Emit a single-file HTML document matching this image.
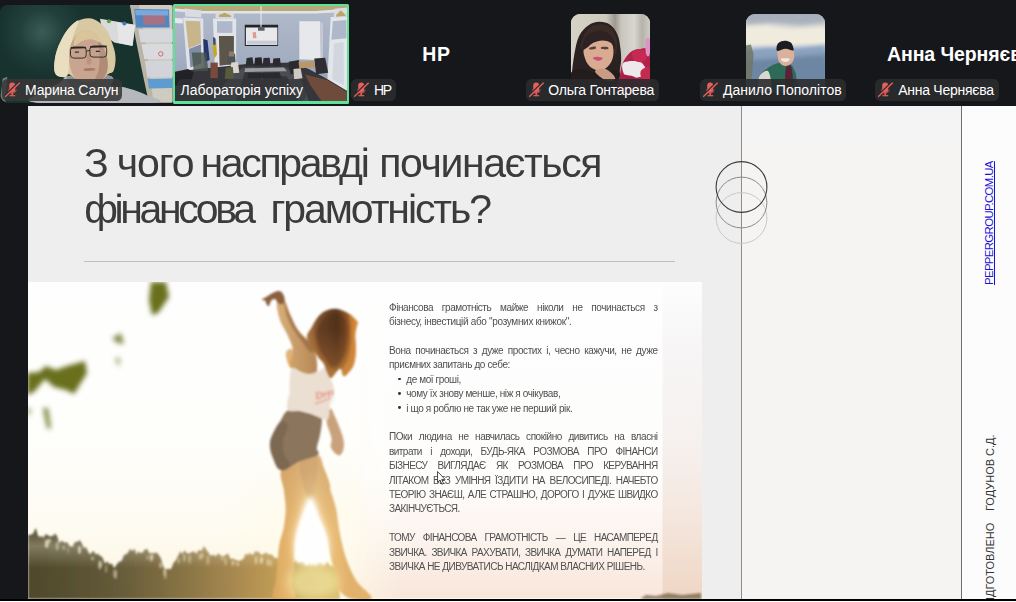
<!DOCTYPE html>
<html lang="uk">
<head>
<meta charset="utf-8">
<title>Zoom</title>
<style>
html,body{margin:0;padding:0;background:#16171b;}
body{width:1016px;height:602px;overflow:hidden;position:relative;font-family:"Liberation Sans",sans-serif;}
#root{position:absolute;left:0;top:0;width:1016px;height:602px;overflow:hidden;background:#16171b;}
.abs{position:absolute;}
.tile{position:absolute;top:5px;height:98px;overflow:hidden;}
.label{position:absolute;top:79.3px;height:21.4px;border-radius:5.5px;background:rgba(42,43,46,.9);color:#fff;font-size:14px;line-height:21px;white-space:pre;}
.label span{position:absolute;top:1.1px;left:0;}
.label svg{position:absolute;left:0;top:0;}
.big{position:absolute;color:#fff;font-weight:bold;font-size:19.5px;line-height:24px;white-space:pre;}
.ava{position:absolute;top:14px;width:79px;height:79px;border-radius:9px;overflow:hidden;}
#slide{position:absolute;left:28px;top:106px;width:988px;height:493px;background:#efeeef;overflow:hidden;}
.ttl{filter:grayscale(1);position:absolute;left:56.6px;color:#3b3b3d;font-size:41px;line-height:46px;white-space:pre;}
.bl{position:absolute;font-size:10px;line-height:12px;height:12px;color:#505053;white-space:pre;}
.bj{white-space:normal;text-align:justify;text-align-last:justify;}
.dot{position:absolute;width:2.8px;height:2.8px;border-radius:50%;background:#333;}
.vt{position:absolute;white-space:pre;font-size:11px;line-height:12px;transform-origin:0 0;transform:rotate(-90deg);color:#333;}
</style>
</head>
<body>
<div id="root">

<!-- participant strip -->
<div class="tile" style="left:0;width:172.7px;top:5px;height:97.5px;border-radius:8px 2px 2px 9px;background:#1d3a33"><svg width="172.7" height="97.5" viewBox="0 5 172.7 97.5" style="position:absolute;left:0;top:0">
<defs>
<radialGradient id="t1g" cx="42" cy="32" r="45" gradientUnits="userSpaceOnUse"><stop offset="0" stop-color="#3b5c56"/><stop offset=".5" stop-color="#22403b"/><stop offset="1" stop-color="#18322e"/></radialGradient>
<filter id="t1b" x="-20%" y="-20%" width="140%" height="140%"><feGaussianBlur stdDeviation="0.7"/></filter>
<filter id="t1d" x="-20%" y="-20%" width="140%" height="140%"><feGaussianBlur stdDeviation="0.35"/></filter>
<filter id="t1c" x="-20%" y="-20%" width="140%" height="140%"><feGaussianBlur stdDeviation="1.6"/></filter>
</defs>
<rect x="0" y="5" width="173" height="98" fill="url(#t1g)"/>
<g filter="url(#t1b)">
<path d="M130.1 4.9 L172.7 4.9 L172.7 102.7 L150.2 102.7 L146.2 80.4 L138.9 45.7 L132.5 16.4Z" fill="#cfcbc0"/>
<path d="M130.1 4.9 L138.9 4.9 L146.2 45.7 L153.5 102.7 L148.9 102.7 L142.5 73.1 L135.2 36.5Z" fill="#b9b4a6"/>
<path d="M134.3 9.1 L169.0 9.5 L169.6 27.4 L136.1 27.4Z" fill="#4f86c4"/>
<path d="M142.5 13.7 L164.5 13.7 L165.4 24.7 L143.5 24.7Z" fill="#c96a6a" opacity=".7"/>
<path d="M135.2 10.1 L168.1 10.4 L168.3 15.5 L135.6 15.2Z" fill="#7fb2e2" opacity=".8"/>
<path d="M138.3 29.2 L172.7 29.2 L172.7 42.0 L140.7 42.4Z" fill="#d6d8dc"/>
<path d="M141.4 44.2 L172.7 43.9 L172.7 58.8 L144.4 59.2Z" fill="#d9dade"/>
<path d="M144.9 61.0 L172.7 60.7 L172.7 76.8 L147.3 77.5Z" fill="#d2d4d9"/>
<path d="M147.7 78.9 L172.7 78.6 L172.7 88.1 L148.9 88.5Z" fill="#5d9bd0"/>
<circle cx="160.8" cy="53.9" r="2.2" fill="none" stroke="#d05050" stroke-width=".8"/>
<path d="M100.1 18.8 L135.2 24.7 L132.3 46.1 L114.2 42.4 L102.3 33.3Z" fill="#d9dadb"/>
<path d="M117.0 22.8 L135.2 25.0 L132.7 45.7 L118.8 43.1Z" fill="#e6e6e8"/>
<circle cx="108.9" cy="21.2" r="2" fill="#5e9a4a"/>
<circle cx="124.3" cy="23.4" r="2" fill="#3f78c8"/>
<path d="M70.4 75.8C79.2 74.7 102.2 74.0 109.6 75.8C117.1 77.6 108.5 83.8 111.5 85.9C114.4 88.0 119.8 86.1 126.1 87.7C132.3 89.4 141.4 92.3 146.2 95.0C151.0 97.7 172.5 101.3 152.6 102.7C132.7 104.1 54.9 104.9 35.6 102.7C16.4 100.5 41.2 94.1 45.7 90.5C50.1 86.8 55.9 84.9 60.3 82.2C64.7 79.6 61.5 77.0 70.4 75.8Z" fill="#b5b9bd"/>
<path d="M70.4 75.8C77.6 74.0 102.4 74.0 109.6 75.8C116.9 77.6 111.9 82.4 110.6 85.9C109.2 89.3 108.1 93.4 102.3 95.0C96.6 96.7 84.5 96.7 78.6 95.0C72.7 93.4 70.9 89.3 69.4 85.9C68.0 82.4 63.1 77.6 70.4 75.8Z" fill="#8f9397"/>
<path d="M54.8 72.2C53.7 68.2 54.4 60.9 55.7 54.8C57.1 48.7 59.3 43.6 62.1 38.4C64.9 33.1 67.7 29.0 71.3 25.6C74.9 22.1 78.0 20.2 82.2 19.2C86.5 18.1 90.8 17.9 95.0 19.7C99.3 21.5 103.0 25.2 106.0 29.2C109.0 33.3 110.1 37.1 111.8 42.0C113.6 47.0 115.2 51.6 115.5 56.7C115.8 61.8 115.0 67.2 113.7 70.4C112.4 73.5 110.2 72.5 108.2 74.0C106.1 75.5 106.0 77.3 102.3 78.6C98.7 79.9 92.3 81.3 87.7 81.3C83.1 81.4 80.3 80.3 76.8 78.9C73.2 77.6 70.6 74.3 68.0 74.0C65.4 73.7 64.5 77.4 62.1 77.1C59.8 76.8 56.0 76.2 54.8 72.2Z" fill="#d8c9a2"/>
<path d="M54.8 72.2C53.7 68.2 54.4 60.9 55.7 54.8C57.1 48.7 59.3 43.6 62.1 38.4C64.9 33.1 68.3 28.7 71.3 25.6C74.2 22.5 78.3 19.0 78.6 21.0C78.9 23.0 74.7 30.5 73.1 36.5C71.5 42.6 70.4 48.1 69.4 54.8C68.5 61.6 69.3 70.0 68.0 74.0C66.7 78.0 64.5 77.4 62.1 77.1C59.8 76.8 56.0 76.2 54.8 72.2Z" fill="#e9dfc0"/>
<path d="M70.4 45.7C71.7 41.7 74.0 37.4 76.8 34.7C79.6 32.0 82.6 30.9 85.9 30.7C89.2 30.5 92.1 31.4 95.0 33.8C97.9 36.2 99.9 40.1 102.0 43.9C104.0 47.6 105.4 50.2 106.4 54.8C107.3 59.4 108.2 65.1 107.5 69.4C106.7 73.8 105.9 76.8 102.3 78.9C98.8 81.1 92.3 81.5 87.7 81.5C83.1 81.5 79.8 81.1 76.8 78.9C73.7 76.8 72.3 73.5 70.9 69.4C69.5 65.4 69.2 60.9 69.1 56.7C69.0 52.4 69.0 49.6 70.4 45.7Z" fill="#c9a48e"/>
<path d="M98.7 42.0C99.9 42.0 104.8 49.9 106.4 54.8C107.9 59.8 108.2 65.1 107.5 69.4C106.7 73.8 104.6 77.0 102.3 78.9C100.1 80.9 95.7 82.1 95.0 80.4C94.4 78.7 97.9 74.0 98.7 69.4C99.5 64.8 99.6 59.8 99.6 54.8C99.6 49.9 97.5 42.0 98.7 42.0Z" fill="#a07c68" opacity=".6"/>
<path d="M76.8 34.7C78.9 32.0 82.6 30.9 85.9 30.7C89.2 30.5 92.3 31.7 95.0 33.8C97.7 35.9 101.5 41.4 100.9 42.4C100.2 43.4 94.7 39.5 91.4 39.3C88.0 39.1 85.4 40.0 82.2 41.1C79.1 42.3 75.0 46.8 74.0 45.7C73.0 44.5 74.6 37.4 76.8 34.7Z" fill="#d9c49c"/>
<path d="M84.4 68.7C85.9 68.2 91.7 67.9 93.6 68.2C95.4 68.4 96.2 69.7 94.7 70.2C93.2 70.7 87.0 71.2 85.2 70.9C83.3 70.6 82.9 69.2 84.4 68.7Z" fill="#8a5048" opacity=".5"/>
<path d="M87.4 54.8C87.9 53.3 89.2 53.3 89.9 54.8C90.6 56.3 91.9 61.5 91.4 63.0C90.8 64.6 87.7 64.9 87.0 63.4C86.3 61.9 86.8 56.4 87.4 54.8Z" fill="#b08a76" opacity=".6"/>
</g>
<g fill="#b8a090" fill-opacity=".35" stroke="#2a2522" stroke-width=".9" filter="url(#t1d)">
<rect x="70.5" y="47.1" width="15.7" height="11.0" rx="3.2"/>
<rect x="89.9" y="46.1" width="16.8" height="11.0" rx="3.2"/>
<path d="M86.3 51.2L89.9 50.4" fill="none"/>
<path d="M70.9 47.9L85.9 47.5M90.3 46.8L106.7 46.4" fill="none" stroke-width="1.7"/>
<path d="M74.9 52.1l4 0M95.9 51.4l4 0" stroke="#3a2c28" stroke-width="1.4" fill="none"/>
</g>
<path d="M2.7 78.6 L7.3 76.8 L5.5 102.3 L0.0 102.3Z" fill="#c8c8c4" opacity=".5" filter="url(#t1b)"/>
</svg></div>
<div class="label" style="left:2px;width:120px;background:rgba(56,55,56,.88)"><svg width="21" height="21" viewBox="0 0 21 21"><use href="#mic"/></svg><span style="left:23.1px;letter-spacing:-0.2px">Марина Салун</span></div>

<div class="abs" style="left:172.7px;top:4px;width:176.5px;height:99.8px;background:#5ce397;border-radius:1.5px"><div class="abs" style="left:2.4px;top:2.4px;width:172.2px;height:95px;overflow:hidden;background:#a9b0bd"><svg width="172.2" height="95" viewBox="175.1 6.4 172.2 95" style="position:absolute;left:0;top:0">
<defs>
<linearGradient id="t2w" x1="0" y1="0" x2="0" y2="1"><stop offset="0" stop-color="#b2bbcb"/><stop offset=".6" stop-color="#a2acc0"/><stop offset="1" stop-color="#8f98ab"/></linearGradient>
<filter id="t2b" x="-20%" y="-20%" width="140%" height="140%"><feGaussianBlur stdDeviation="0.6"/></filter>
<filter id="t2c" x="-20%" y="-20%" width="140%" height="140%"><feGaussianBlur stdDeviation="1.4"/></filter>
</defs>
<rect x="175" y="6" width="173" height="96" fill="url(#t2w)"/>
<g filter="url(#t2b)">
<path d="M175.1 6.4 L347.3 6.4 L347.3 9.1 L316.2 11.3 L202.9 11.3 L175.1 8.8Z" fill="#b7a878"/>
<path d="M175.1 8.8 L202.9 11.3 L316.2 11.3 L347.3 9.1 L347.3 12.1 L316.2 13.9 L202.9 13.9 L175.1 11.7Z" fill="#e3e4e6"/>
<!-- left window -->
<path d="M183.2 17.9 L203.3 19.0 L204.0 68.0 L187.5 73.1Z" fill="#dfe2e8"/>
<path d="M185.7 21.2 L200.3 21.6 L201.1 43.9 L188.6 49.0Z" fill="#c9b58c"/>
<path d="M189.0 49.3 L201.1 44.6 L201.4 64.0 L190.5 68.0Z" fill="#7f8da6"/>
<path d="M184.6 8.8 L201.4 11.0 L201.4 17.9 L185.4 16.8Z" fill="#d9dce2"/>
<path d="M175.1 18.3 L182.8 19.0 L182.8 23.8 L175.1 23.4Z" fill="#e6e8ec"/>
<!-- door -->
<path d="M213.1 19.0 L236.2 19.0 L236.2 71.6 L215.0 71.6Z" fill="#e1e4e9"/>
<path d="M219.0 36.5 L234.0 36.5 L234.0 64.3 L219.7 66.2Z" fill="#5b554c"/>
<path d="M217.1 21.6 L232.5 21.6 L232.5 33.3 L217.1 33.3Z" fill="#aeb8ca"/>
<path d="M215.7 12.8 L234.0 12.8 L234.0 19.0 L215.7 19.0Z" fill="#d8dadf"/>
<path d="M219.0 15.5 L224.8 13.2 L231.2 16.1 L231.2 17.5 L219.0 17.5Z" fill="#b9a668"/>
<!-- flags -->
<path d="M203.3 39.3 L207.6 40.6 L209.8 60.3 L205.8 62.1 L204.0 54.8Z" fill="#27366c"/>
<path d="M213.1 37.5 L216.1 39.3 L217.1 54.8 L214.6 58.8 L213.1 51.2Z" fill="#c7a624"/>
<path d="M213.1 37.5 L215.3 38.4 L215.7 44.8 L213.5 45.3Z" fill="#2f4a9a"/>
<!-- screen -->
<path d="M244.9 25.2 L278.2 25.2 L278.2 46.4 L244.9 46.4Z" fill="#23262b"/>
<path d="M246.0 27.8 L277.5 27.8 L277.5 45.3 L246.0 45.3Z" fill="#e9e9ec"/>
<path d="M247.1 41.1 L276.7 41.1 L276.7 45.0 L247.1 45.0Z" fill="#c9ccd4"/>
<path d="M252.6 32.9 L255.9 32.2 L256.6 38.4 L253.3 38.7Z" fill="#d98a7a" opacity=".8"/>
<path d="M260.6 6.4 L261.7 6.4 L261.7 27.4 L260.6 27.4Z" fill="#e8e8ea"/>
<path d="M258.1 27.4 L264.7 27.4 L264.7 31.1 L258.1 31.1Z" fill="#5a5c60"/>
<!-- right cabinet -->
<path d="M299.4 21.6 L320.2 21.6 L321.0 60.7 L299.4 59.6Z" fill="#e6e8eb"/>
<path d="M320.2 22.3 L323.1 23.4 L323.1 58.5 L321.0 60.7Z" fill="#c3c8d2"/>
<!-- far right door -->
<path d="M330.8 17.5 L347.3 16.8 L347.3 91.4 L327.5 80.4Z" fill="#e2e5ea"/>
<path d="M333.0 21.6 L346.5 20.5 L346.5 38.7 L331.5 40.2Z" fill="#aeb8ca"/>
<path d="M334.1 43.9 L343.6 42.4 L344.0 85.9 L332.6 79.7Z" fill="#d2d6de"/>
<path d="M334.5 9.1 L346.9 8.0 L346.9 16.8 L333.7 18.3Z" fill="#dadde3"/>
<path d="M336.3 15.5 L340.9 10.6 L345.4 15.0 L345.4 16.4 L336.3 17.2Z" fill="#b9a668"/>
<!-- floor / lower dark -->
<path d="M175.1 76.8 L190.1 70.4 L213.9 68.0 L246.8 64.3 L290.6 63.0 L308.9 69.4 L329.0 80.4 L347.3 91.4 L347.3 101.6 L175.1 101.6Z" fill="#34363a"/>
<path d="M305.2 74.9 L327.2 80.4 L347.3 92.3 L347.3 101.6 L321.7 101.6 L310.7 85.9Z" fill="#6e4c3a"/>
<path d="M175.1 72.2 L188.3 69.4 L193.8 73.1 L190.1 85.9 L175.1 85.9Z" fill="#232427"/>
<!-- table top -->
<path d="M243.1 68.0 L285.5 67.3 L301.6 80.4 L308.9 101.6 L297.9 101.6 L287.0 76.8 L244.9 72.7 L235.8 101.6 L212.0 101.6 L230.3 76.8Z" fill="#4a4d52"/>
<path d="M245.3 68.7 L284.0 68.0 L287.0 71.6 L244.6 72.4Z" fill="#9a9da2"/>
<path d="M261.4 73.1 L262.8 73.1 L262.8 78.6 L261.4 78.6Z" fill="#d8d8d8"/>
<path d="M248.6 73.1 L279.6 72.7 L281.5 78.6 L247.7 78.9Z" fill="#2a2b2e"/>
<!-- people -->
<path d="M228.1 54.8 L235.1 54.1 L235.8 64.3 L227.7 65.1Z" fill="#4e5257"/>
<path d="M229.2 51.9 L234.0 51.9 L234.3 57.0 L228.8 57.0Z" fill="#8f7a6a"/>
<path d="M246.8 58.5 L252.6 57.7 L253.7 65.8 L245.7 66.2Z" fill="#2c2d31"/>
<path d="M255.2 58.1 L261.7 57.7 L262.5 65.8 L254.4 65.8Z" fill="#25262a"/>
<path d="M263.6 58.5 L269.8 58.1 L270.5 66.2 L262.8 66.2Z" fill="#2e2a30"/>
<path d="M273.4 58.8 L280.0 58.5 L281.1 66.2 L272.7 66.5Z" fill="#2a2b2f"/>
<path d="M231.4 63.0 L238.0 62.5 L239.4 73.1 L230.3 73.8Z" fill="#d9d6cf"/>
<path d="M225.9 68.0 L232.9 67.3 L234.0 78.6 L224.8 79.7Z" fill="#5a5a3e"/>
<path d="M288.8 62.1 L299.0 60.3 L301.6 73.1 L290.6 74.9Z" fill="#2b2b2f"/>
<path d="M293.5 69.4 L300.8 68.7 L302.7 78.6 L294.3 79.7Z" fill="#cfc8c2"/>
<path d="M314.4 58.8 L325.3 58.1 L328.3 73.1 L316.2 74.6Z" fill="#2d2e33"/>
<path d="M298.7 62.1 L314.4 61.4 L315.1 68.0 L299.4 68.7Z" fill="#b9976a"/>
<path d="M210.6 63.0 L217.9 63.0 L217.9 78.6 L210.6 78.6Z" fill="#7a4a3a"/>
<path d="M191.9 53.0 L206.5 53.0 L208.4 71.3 L193.8 71.6Z" fill="#48524a" opacity=".8"/>
</g>
</svg></div></div>
<div class="label" style="left:177px;width:129px;background:rgba(52,53,56,.62)"><span style="left:3.6px;letter-spacing:-0.03px">Лабораторія успіху</span></div>

<div class="big" style="left:422.3px;top:41.8px;letter-spacing:0.7px">HP</div>
<div class="label" style="left:351px;width:45px"><svg width="21" height="21" viewBox="0 0 21 21"><use href="#mic"/></svg><span style="left:22.9px;letter-spacing:-1.3px">HP</span></div>

<div class="ava" style="left:571px;background:#c9c4b8"><svg width="79" height="79" viewBox="570.8 14.2 79 79" style="position:absolute;left:0;top:0">
<defs>
<linearGradient id="a1w" x1="0" y1="0" x2="1" y2="0"><stop offset="0" stop-color="#d6d2c6"/><stop offset=".45" stop-color="#cdc9bd"/><stop offset=".56" stop-color="#9d998f"/><stop offset=".64" stop-color="#c9c6bd"/><stop offset=".8" stop-color="#d8d6d0"/><stop offset=".9" stop-color="#b5b2aa"/><stop offset="1" stop-color="#cfcdc6"/></linearGradient>
<filter id="a1b" x="-20%" y="-20%" width="140%" height="140%"><feGaussianBlur stdDeviation="0.7"/></filter>
</defs>
<rect x="570" y="14" width="80" height="80" fill="url(#a1w)"/>
<g filter="url(#a1b)">
<path d="M571.2 78.6C571.8 71.6 572.7 62.4 574.1 54.8C575.5 47.3 576.3 41.8 578.8 36.5C581.3 31.3 584.4 28.2 588.0 25.6C591.6 23.0 595.0 22.1 598.9 21.9C602.9 21.8 606.6 22.6 609.9 24.9C613.2 27.2 615.4 30.6 617.2 34.7C619.1 38.9 619.5 43.2 620.1 47.9C620.8 52.6 621.0 56.1 620.9 60.7C620.8 65.2 619.3 69.5 619.6 73.1C619.9 76.7 621.8 76.7 622.3 80.4C622.8 84.1 631.6 91.2 622.3 93.6C613.1 95.9 580.0 96.3 570.8 93.6C561.6 90.9 570.6 85.6 571.2 78.6Z" fill="#2b2220"/>
<path d="M580.3 45.7C581.0 42.1 584.4 33.0 588.0 29.2C591.6 25.5 596.2 24.7 600.4 24.7C604.6 24.7 608.4 26.1 611.4 29.2C614.3 32.4 616.2 37.4 616.9 42.0C617.5 46.6 616.0 55.2 615.0 54.8C614.0 54.5 614.0 43.8 611.4 40.2C608.7 36.6 604.4 35.2 600.4 34.7C596.5 34.2 592.4 34.8 589.4 37.5C586.5 40.1 585.6 47.9 584.0 49.3C582.3 50.8 579.6 49.3 580.3 45.7Z" fill="#3a2c26"/>
<path d="M583.6 49.0C584.3 46.0 585.0 42.6 588.0 40.6C591.0 38.5 596.5 37.5 600.4 37.5C604.4 37.5 607.6 38.4 609.9 40.6C612.2 42.8 612.9 46.1 613.2 49.7C613.5 53.3 613.2 57.3 611.7 60.7C610.3 64.1 607.9 66.9 605.2 68.7C602.5 70.5 599.7 71.1 596.8 70.5C593.8 70.0 591.0 68.2 588.7 65.8C586.5 63.4 585.2 60.0 584.3 57.0C583.4 54.0 582.9 51.9 583.6 49.0Z" fill="#d9ab93"/>
<path d="M582.1 49.3C582.0 47.3 583.2 39.8 585.8 36.5C588.4 33.3 592.8 31.7 596.8 31.1C600.7 30.4 604.6 31.1 607.7 32.9C610.8 34.7 612.8 38.2 614.1 41.1C615.4 44.1 615.7 49.0 615.0 49.3C614.4 49.7 612.8 44.5 610.5 42.9C608.2 41.4 605.4 40.6 602.2 40.6C599.1 40.6 595.9 41.6 593.1 42.9C590.3 44.3 588.7 46.7 586.7 47.9C584.7 49.0 582.3 51.4 582.1 49.3Z" fill="#2f2420"/>
<path d="M592.7 58.1C592.6 57.4 595.9 57.0 597.7 57.0C599.4 57.1 602.5 57.8 602.6 58.5C602.7 59.2 600.0 61.1 598.2 61.0C596.4 61.0 592.8 58.8 592.7 58.1Z" fill="#cf4f78"/>
<path d="M589.4 47.9C590.4 47.4 593.9 46.6 594.9 46.8C596.0 47.0 596.2 48.5 595.3 49.0C594.4 49.5 590.9 49.9 589.8 49.7C588.8 49.5 588.5 48.4 589.4 47.9Z" fill="#5a4038"/>
<path d="M601.3 47.1C602.3 46.8 606.2 46.8 607.4 47.1C608.5 47.5 608.7 48.9 607.7 49.3C606.7 49.7 602.8 49.7 601.7 49.3C600.5 48.9 600.3 47.5 601.3 47.1Z" fill="#5a4038"/>
<path d="M570.8 73.1C573.2 68.8 579.3 69.4 584.0 69.4C588.6 69.4 592.5 72.8 596.8 73.1C601.0 73.4 603.6 71.3 607.7 71.3C611.8 71.3 617.0 69.1 619.6 73.1C622.2 77.1 631.1 89.9 622.3 93.6C613.6 97.3 580.1 97.3 570.8 93.6C561.5 89.9 568.4 77.4 570.8 73.1Z" fill="#241c1e"/>
<path d="M594.9 71.6C594.9 69.7 602.3 68.2 605.9 69.4C609.5 70.7 615.0 76.6 615.0 78.6C615.0 80.6 609.5 81.7 605.9 80.4C602.3 79.2 594.9 73.6 594.9 71.6Z" fill="#c99a84"/>
<!-- flowers -->
<path d="M622.3 64.0C624.1 59.7 626.7 55.6 629.6 53.0C632.6 50.4 635.2 49.3 638.8 49.3C642.3 49.3 647.5 45.0 649.4 53.0C651.3 61.0 654.9 86.3 649.4 93.6C643.9 100.9 624.0 96.6 618.7 93.6C613.3 90.5 618.9 82.1 619.6 76.8C620.3 71.4 620.5 68.2 622.3 64.0Z" fill="#b3234c"/>
<path d="M622.3 64.3C623.5 61.7 628.0 61.5 631.5 61.2C634.9 61.0 638.9 60.9 641.5 63.0C644.2 65.2 646.9 70.5 646.1 73.1C645.3 75.7 640.7 77.2 637.0 77.7C633.2 78.2 627.7 78.2 625.1 75.8C622.4 73.4 621.2 67.0 622.3 64.3Z" fill="#ece8ec"/>
<path d="M631.8 53.0C632.5 50.9 636.2 49.7 638.8 49.7C641.4 49.7 645.1 50.9 646.1 53.0C647.1 55.1 646.2 59.7 644.3 61.2C642.3 62.7 637.4 62.7 635.1 61.2C632.9 59.7 631.2 55.1 631.8 53.0Z" fill="#c62a52"/>
<path d="M645.2 41.1C645.8 38.3 648.6 36.8 649.4 39.3C650.1 41.8 650.0 52.0 649.4 54.8C648.8 57.6 646.9 57.3 646.1 54.8C645.3 52.4 644.6 43.9 645.2 41.1Z" fill="#df93c2"/>
<path d="M619.6 76.8C621.6 73.6 626.5 75.2 629.6 75.8C632.8 76.5 636.3 77.2 637.0 80.4C637.6 83.6 636.6 91.2 633.3 93.6C630.0 95.9 621.2 96.6 618.7 93.6C616.2 90.5 617.6 79.9 619.6 76.8Z" fill="#a81c44"/>
<path d="M640.6 71.3C641.9 69.0 647.8 65.6 649.4 67.6C651.0 69.6 650.6 79.9 649.4 82.2C648.1 84.5 644.0 82.4 642.4 80.4C640.9 78.4 639.4 73.6 640.6 71.3Z" fill="#c42c50"/>
</g>
</svg></div>
<div class="label" style="left:525.8px;width:133.5px"><svg width="21" height="21" viewBox="0 0 21 21"><use href="#mic"/></svg><span style="left:22.5px;letter-spacing:-0.257px">Ольга Гонтарева</span></div>

<div class="ava" style="left:745.5px;background:#7d94ad"><svg width="79" height="79" viewBox="745.4 14.2 79 79" style="position:absolute;left:0;top:0">
<defs>
<linearGradient id="a2s" x1="0" y1="0" x2="0" y2="1"><stop offset="0" stop-color="#9aa4b4"/><stop offset=".12" stop-color="#c9ccd0"/><stop offset=".22" stop-color="#ece8da"/><stop offset=".34" stop-color="#f2eedf"/><stop offset=".42" stop-color="#b9c6d8"/><stop offset=".5" stop-color="#7f98b8"/><stop offset=".65" stop-color="#6f89a8"/><stop offset="1" stop-color="#7890ac"/></linearGradient>
<filter id="a2b" x="-20%" y="-20%" width="140%" height="140%"><feGaussianBlur stdDeviation="0.7"/></filter>
<filter id="a2c" x="-20%" y="-20%" width="140%" height="140%"><feGaussianBlur stdDeviation="2"/></filter>
</defs>
<rect x="745" y="14" width="80" height="80" fill="url(#a2s)"/>
<g filter="url(#a2c)">
<path d="M745.4 14.3 L824.3 14.3 L824.3 21.9 L799.6 24.7 L772.2 21.9 L745.4 23.8Z" fill="#a9b0bc"/>
<path d="M745.4 27.4 L766.8 25.6 L792.3 31.1 L824.3 27.4 L824.3 42.0 L792.3 44.8 L745.4 45.7Z" fill="#f0ecdd"/>
<path d="M745.4 53.0 L766.8 47.9 L792.3 49.7 L824.3 45.7 L824.3 60.3 L745.4 62.1Z" fill="#8aa2c0"/>
<path d="M745.4 60.3 L824.3 54.8 L824.3 93.6 L745.4 93.6Z" fill="#6d86a4"/>
</g>
<g filter="url(#a2b)">
<path d="M745.4 45.7 L750.3 44.8 L753.0 54.8 L751.2 78.6 L745.4 80.4Z" fill="#6f7460" opacity=".8"/>
<!-- jacket -->
<path d="M758.0 78.9C759.0 74.9 759.9 74.0 763.1 71.3C766.3 68.5 771.3 64.9 775.9 63.6C780.5 62.3 785.4 62.6 788.7 64.0C792.0 65.3 792.9 68.3 794.2 71.3C795.5 74.2 795.8 76.4 796.0 80.4C796.2 84.4 802.0 91.2 795.1 93.6C788.2 95.9 764.3 96.2 757.6 93.6C750.9 90.9 757.0 83.0 758.0 78.9Z" fill="#2f6a58"/>
<path d="M758.0 78.9C758.8 75.2 760.3 73.8 762.2 72.7C764.1 71.7 767.1 69.3 768.6 73.1C770.1 76.8 772.4 89.9 770.4 93.6C768.4 97.3 759.9 96.2 757.6 93.6C755.4 90.9 757.2 82.7 758.0 78.9Z" fill="#d9d8d0"/>
<path d="M785.0 69.4C786.0 64.8 789.6 63.6 790.9 68.0C792.2 72.3 793.3 89.0 792.3 93.6C791.4 98.2 787.1 97.9 785.8 93.6C784.4 89.2 784.1 74.0 785.0 69.4Z" fill="#5a2438"/>
<!-- head -->
<path d="M777.4 49.3C778.1 47.6 779.3 47.5 781.4 47.1C783.4 46.8 786.6 46.6 788.7 47.1C790.7 47.7 791.8 48.2 792.7 50.3C793.6 52.3 793.9 55.9 793.4 58.5C793.0 61.0 791.8 62.9 790.1 64.3C788.5 65.7 786.1 66.4 784.1 66.2C782.1 65.9 780.5 64.8 779.2 63.0C777.9 61.3 777.3 59.1 777.0 56.7C776.7 54.2 776.6 51.1 777.4 49.3Z" fill="#d9b19c"/>
<path d="M775.9 47.9C776.0 46.4 776.6 44.2 778.1 42.9C779.6 41.7 781.9 41.0 784.1 40.9C786.3 40.9 788.6 41.5 790.1 42.8C791.7 44.0 792.3 46.4 792.7 47.9C793.1 49.3 793.7 50.6 792.3 50.8C791.0 51.0 787.7 48.9 785.0 49.0C782.3 49.0 779.0 51.4 777.4 51.2C775.7 51.0 775.8 49.4 775.9 47.9Z" fill="#1d1e22"/>
<path d="M780.6 58.8C781.8 58.3 787.5 58.3 788.7 58.8C789.9 59.4 788.4 61.2 787.2 61.8C786.1 62.3 783.5 62.3 782.3 61.8C781.1 61.2 779.5 59.4 780.6 58.8Z" fill="#f2e8e2"/>
</g>
</svg></div>
<div class="label" style="left:700px;width:146px"><svg width="21" height="21" viewBox="0 0 21 21"><use href="#mic"/></svg><span style="left:22.9px;letter-spacing:0.02px">Данило Пополітов</span></div>

<div class="big" style="left:887px;top:41.8px;letter-spacing:-0.1px">Анна Черняєва</div>
<div class="label" style="left:874.8px;width:124px"><svg width="21" height="21" viewBox="0 0 21 21"><use href="#mic"/></svg><span style="left:23.4px;letter-spacing:-0.258px">Анна Черняєва</span></div>

<svg width="0" height="0" style="position:absolute">
<defs>
<g id="mic">
<path d="M7.2 6.6a3 3 0 0 1 6 0v4.2a3 3 0 0 1-6 0z" fill="#e4605d"/>
<path d="M6.3 10.2c0 2.6 1.7 4 3.9 4s3.9-1.4 3.9-4" fill="none" stroke="#e4605d" stroke-width="1.1" opacity=".55"/>
<path d="M10.2 13.6v2.6" stroke="#e4605d" stroke-width="1.5" fill="none"/>
<path d="M7.4 16.7h5.8" stroke="#e4605d" stroke-width="1.2" fill="none"/>
<path d="M2.5 17L17 2.9" stroke="#2a2b2e" stroke-width="1.5"/>
<path d="M3.2 17.8L17.7 3.7" stroke="#e4605d" stroke-width="1.35"/>
</g>
</defs>
</svg>

<!-- shared slide -->
<div id="slide">
  <div class="abs" style="left:713.5px;top:0;width:220px;height:493px;background:#f5f4f3"></div>
  <div class="abs" style="left:713.5px;top:0;width:220px;height:38px;background:#f4f4f5"></div>
  <div class="abs" style="left:934px;top:0;width:60px;height:493px;background:#fcfcfd"></div>
  <div class="abs" style="left:713px;top:0;width:1px;height:493px;background:#8f8f8f"></div>
  <div class="abs" style="left:933px;top:0;width:1.2px;height:493px;background:#6f6f6f"></div>
  <svg class="abs" style="left:680px;top:40px" width="70" height="110" viewBox="708 146 70 110">
    <circle cx="741.5" cy="218" r="25.4" fill="none" stroke="#c9c9c9" stroke-width="1"/>
    <circle cx="741.5" cy="202.5" r="25.4" fill="none" stroke="#8a8a8a" stroke-width="1"/>
    <circle cx="741.5" cy="187" r="25.4" fill="none" stroke="#3c3c3c" stroke-width="1.1"/>
  </svg>
  <div class="ttl" style="left:55.9px;top:33.8px;letter-spacing:0px">З</div>
  <div class="ttl" style="left:88.7px;top:33.8px;letter-spacing:-1.067px">чого</div>
  <div class="ttl" style="left:172.5px;top:33.8px;letter-spacing:-2.35px">насправді</div>
  <div class="ttl" style="left:351.3px;top:33.8px;letter-spacing:-1.43px">починається</div>
  <div class="ttl" style="left:56.2px;top:80.2px;letter-spacing:-3.38px">фінансова</div>
  <div class="ttl" style="left:242.4px;top:80.2px;letter-spacing:-2.082px">грамотність?</div>
  <div class="abs" style="left:56.3px;top:154.6px;width:590.5px;height:1.2px;background:#c0c0c0"></div>
  <div class="abs" id="photo" style="left:0;top:176px;width:673.5px;height:317px;background:#fdf8ee;overflow:hidden"><svg width="673.5" height="317" viewBox="28 282 673.5 317" style="position:absolute;left:0;top:0">
<defs>
<linearGradient id="pSky" x1="0" y1="0" x2="0" y2="1">
<stop offset="0" stop-color="#fefefe"/><stop offset=".5" stop-color="#fefefb"/><stop offset=".8" stop-color="#fefbf1"/><stop offset="1" stop-color="#fcf4e0"/>
</linearGradient>
<radialGradient id="pSun" cx="313" cy="548" r="100" gradientUnits="userSpaceOnUse">
<stop offset="0" stop-color="#ffffff" stop-opacity="1"/><stop offset=".25" stop-color="#fffdf0" stop-opacity=".95"/><stop offset=".5" stop-color="#fffbea" stop-opacity=".55"/><stop offset=".75" stop-color="#fffae8" stop-opacity=".2"/><stop offset="1" stop-color="#fffae8" stop-opacity="0"/>
</radialGradient>
<linearGradient id="pTree" x1="28" y1="0" x2="340" y2="0" gradientUnits="userSpaceOnUse">
<stop offset="0" stop-color="#453f22"/><stop offset=".28" stop-color="#5c5230"/><stop offset=".52" stop-color="#86703e"/><stop offset=".72" stop-color="#b08c4c"/><stop offset=".88" stop-color="#c9a655"/><stop offset="1" stop-color="#d8bc6a"/>
</linearGradient>
<linearGradient id="pTreeV" x1="0" y1="530" x2="0" y2="599" gradientUnits="userSpaceOnUse">
<stop offset="0" stop-color="#fff" stop-opacity=".0"/><stop offset=".25" stop-color="#fff" stop-opacity=".75"/><stop offset="1" stop-color="#fff" stop-opacity="1"/>
</linearGradient>
<mask id="pTreeM"><rect x="28" y="520" width="400" height="80" fill="url(#pTreeV)"/></mask>
<linearGradient id="pHaze" x1="0" y1="528" x2="0" y2="568" gradientUnits="userSpaceOnUse"><stop offset="0" stop-color="#fff8e6" stop-opacity="0"/><stop offset=".45" stop-color="#fff8e6" stop-opacity=".28"/><stop offset="1" stop-color="#fff8e6" stop-opacity="0"/></linearGradient>
<linearGradient id="pStrip" x1="0" y1="282" x2="0" y2="599" gradientUnits="userSpaceOnUse"><stop offset="0" stop-color="#fdfdfd"/><stop offset=".22" stop-color="#f7f5f6"/><stop offset=".5" stop-color="#f6f1ef"/><stop offset=".75" stop-color="#f4e6dd"/><stop offset="1" stop-color="#efd6c4"/></linearGradient>
<linearGradient id="pPanel" x1="0" y1="282" x2="0" y2="599" gradientUnits="userSpaceOnUse">
<stop offset="0" stop-color="#fefefe"/><stop offset=".62" stop-color="#fefdfc"/><stop offset=".82" stop-color="#fcf3ed"/><stop offset="1" stop-color="#f8e6da"/>
</linearGradient>
<linearGradient id="pPanelFade" x1="345" y1="0" x2="400" y2="0" gradientUnits="userSpaceOnUse">
<stop offset="0" stop-color="#fff" stop-opacity="0"/><stop offset="1" stop-color="#fff" stop-opacity="1"/>
</linearGradient>
<mask id="pPanelMask"><rect x="28" y="282" width="674" height="316" fill="url(#pPanelFade)"/></mask>
<linearGradient id="pLegL" x1="270" y1="0" x2="312" y2="0" gradientUnits="userSpaceOnUse">
<stop offset="0" stop-color="#d8a45c"/><stop offset=".55" stop-color="#e9bb74"/><stop offset="1" stop-color="#f8dc9c"/>
</linearGradient>
<linearGradient id="pLegR" x1="305" y1="0" x2="350" y2="0" gradientUnits="userSpaceOnUse">
<stop offset="0" stop-color="#f8dc9c"/><stop offset=".5" stop-color="#ecc07a"/><stop offset="1" stop-color="#e2b26c"/>
</linearGradient>
<linearGradient id="pArm" x1="275" y1="0" x2="315" y2="0" gradientUnits="userSpaceOnUse">
<stop offset="0" stop-color="#d9b07a"/><stop offset="1" stop-color="#b98a58"/>
</linearGradient>
<linearGradient id="pLegV" x1="0" y1="470" x2="0" y2="599" gradientUnits="userSpaceOnUse">
<stop offset="0" stop-color="#c99c6a" stop-opacity=".55"/><stop offset=".45" stop-color="#c99c6a" stop-opacity="0"/>
</linearGradient>
<linearGradient id="pHair" x1="306" y1="0" x2="358" y2="0" gradientUnits="userSpaceOnUse">
<stop offset="0" stop-color="#b07a44"/><stop offset=".25" stop-color="#7a4e2a"/><stop offset=".6" stop-color="#5e3a20"/><stop offset=".85" stop-color="#a05e28"/><stop offset="1" stop-color="#d98a3a"/>
</linearGradient>
<linearGradient id="pHairV" x1="0" y1="330" x2="0" y2="378" gradientUnits="userSpaceOnUse">
<stop offset="0" stop-color="#d08a40" stop-opacity="0"/><stop offset="1" stop-color="#d08a40" stop-opacity=".75"/>
</linearGradient>
<clipPath id="pTopClip"><path d="M292.3 368.1C294.1 367.0 297.0 370.2 299.8 371.3C302.7 372.4 305.2 374.0 308.2 374.1C311.3 374.2 313.5 373.3 316.8 372.1C320.0 371.0 323.7 366.7 326.1 367.7C328.5 368.7 328.8 374.1 330.1 377.7C331.5 381.3 333.3 382.9 333.7 387.7C334.2 392.4 333.1 402.5 332.7 404.0C332.4 405.5 332.3 395.3 331.7 396.0C331.2 396.7 330.5 403.7 329.7 408.0C328.9 412.2 329.9 418.1 327.3 419.5C324.8 421.0 320.4 417.4 315.8 415.9C311.2 414.4 306.9 412.2 301.8 411.1C296.8 410.1 290.3 412.7 287.9 410.0C285.5 407.2 288.2 398.6 288.5 396.0C288.8 393.4 289.2 398.9 289.5 395.6C289.7 392.3 289.4 382.6 289.9 377.7C290.4 372.7 290.5 369.3 292.3 368.1Z"/></clipPath>
<filter id="pb1" x="-20%" y="-20%" width="140%" height="140%"><feGaussianBlur stdDeviation="1.3"/></filter>
<filter id="pb2" x="-20%" y="-20%" width="140%" height="140%"><feGaussianBlur stdDeviation="2.4"/></filter>
<filter id="pb3" x="-20%" y="-20%" width="140%" height="140%"><feGaussianBlur stdDeviation="0.8"/></filter>
<filter id="pb4" x="-30%" y="-30%" width="160%" height="160%"><feGaussianBlur stdDeviation="5"/></filter>
</defs>
<rect x="28" y="282" width="674" height="316" fill="url(#pSky)"/>
<!-- sun glow -->
<rect x="28" y="282" width="460" height="316" fill="url(#pSun)"/>
<!-- tree line -->
<g filter="url(#pb3)" opacity=".95">
<path fill="url(#pTree)" d="M28 599L28.0 534.8L30.4 535.0L33.2 533.6L35.8 528.0L37.9 535.5L40.2 537.2L41.8 535.8L43.5 537.9L45.7 534.0L47.4 534.9L50.1 536.6L51.7 536.0L53.3 535.9L54.9 533.3L57.5 537.0L59.2 543.4L61.8 540.4L64.6 543.1L66.9 541.9L69.7 546.1L72.4 547.0L74.2 543.3L75.9 541.6L77.3 542.3L79.6 539.9L81.9 543.6L83.8 548.2L85.8 546.7L87.9 550.9L89.4 553.9L90.8 553.6L93.4 550.7L95.9 554.4L98.1 553.4L99.6 555.4L102.3 557.1L104.8 563.3L107.5 561.6L109.4 564.2L111.9 563.4L114.3 568.3L116.9 563.9L119.7 561.3L121.5 561.2L124.2 554.8L126.9 554.1L128.8 551.3L130.4 548.5L132.0 551.2L134.8 548.7L136.3 554.4L138.4 551.3L140.2 553.0L142.7 552.6L144.7 549.6L147.4 548.9L149.5 553.7L151.1 552.7L153.8 553.4L156.3 552.2L158.3 554.3L160.9 558.2L162.9 566.1L165.5 570.2L167.6 568.5L170.0 569.5L171.8 567.4L173.4 563.0L176.2 559.8L178.4 555.2L180.3 551.1L182.1 554.2L184.7 550.3L187.2 553.4L189.6 553.2L192.1 551.7L194.4 551.4L196.5 553.7L198.9 549.7L201.6 550.9L203.8 545.9L206.0 549.1L208.3 552.6L210.9 556.0L213.4 554.6L215.7 556.4L218.2 553.2L220.8 555.7L223.2 556.5L225.9 554.7L228.1 553.3L230.6 559.3L232.7 558.5L235.1 559.6L236.8 560.6L239.0 560.7L241.0 560.2L243.4 558.7L245.9 553.3L247.5 554.9L249.8 552.8L252.2 555.0L253.6 553.7L255.3 550.7L256.9 552.0L258.6 551.2L260.0 553.4L261.9 554.9L264.2 553.2L266.8 552.5L268.8 554.7L270.8 554.0L273.3 556.1L274.8 557.9L276.3 557.7L278.2 558.2L280.9 560.2L282.9 560.6L285.2 558.2L286.8 560.0L289.0 562.7L291.8 561.1L293.7 563.3L295.1 558.5L297.3 562.2L298.9 562.6L301.5 561.4L303.5 560.6L305.3 565.6L307.2 565.7L309.9 563.6L311.7 566.2L313.8 562.8L315.6 566.7L317.7 562.4L319.8 561.6L322.1 563.8L323.9 566.2L326.4 561.5L328.6 563.4L331.3 566.9L333.0 563.8L334.6 568.6L336.5 566.3L338.5 566.8L340 599Z"/>
</g>
<g filter="url(#pb1)"><ellipse cx="233.3" cy="562.8" rx="1.6" ry="2.4" fill="#fdf2d2" opacity="0.41"/><ellipse cx="178.7" cy="561.0" rx="1.1" ry="3.0" fill="#fdf2d2" opacity="0.49"/><ellipse cx="160.7" cy="565.3" rx="1.5" ry="3.1" fill="#fdf2d2" opacity="0.51"/><ellipse cx="49.5" cy="541.0" rx="1.3" ry="2.8" fill="#fdf2d2" opacity="0.62"/><ellipse cx="270.9" cy="563.1" rx="0.8" ry="3.6" fill="#fdf2d2" opacity="0.57"/><ellipse cx="151.2" cy="557.9" rx="1.5" ry="3.7" fill="#fdf2d2" opacity="0.52"/><ellipse cx="165.3" cy="574.5" rx="1.2" ry="4.7" fill="#fdf2d2" opacity="0.44"/><ellipse cx="261.5" cy="559.6" rx="1.1" ry="2.6" fill="#fdf2d2" opacity="0.59"/><ellipse cx="57.2" cy="546.0" rx="1.5" ry="4.5" fill="#fdf2d2" opacity="0.45"/><ellipse cx="114.5" cy="573.8" rx="1.7" ry="4.3" fill="#fdf2d2" opacity="0.35"/><ellipse cx="164.4" cy="572.0" rx="1.3" ry="3.6" fill="#fdf2d2" opacity="0.42"/><ellipse cx="79.9" cy="549.8" rx="1.6" ry="3.8" fill="#fdf2d2" opacity="0.32"/><ellipse cx="99.8" cy="565.0" rx="1.6" ry="4.5" fill="#fdf2d2" opacity="0.53"/><ellipse cx="46.6" cy="543.8" rx="1.8" ry="4.2" fill="#fdf2d2" opacity="0.65"/><ellipse cx="222.3" cy="558.3" rx="1.6" ry="2.1" fill="#fdf2d2" opacity="0.38"/><ellipse cx="207.9" cy="560.3" rx="1.5" ry="4.9" fill="#fdf2d2" opacity="0.35"/><ellipse cx="116.0" cy="574.4" rx="0.9" ry="4.8" fill="#fdf2d2" opacity="0.51"/><ellipse cx="147.6" cy="557.4" rx="1.4" ry="2.5" fill="#fdf2d2" opacity="0.32"/><ellipse cx="68.1" cy="550.4" rx="0.9" ry="3.1" fill="#fdf2d2" opacity="0.32"/><ellipse cx="189.6" cy="559.3" rx="1.7" ry="4.2" fill="#fdf2d2" opacity="0.35"/><ellipse cx="152.2" cy="557.1" rx="1.4" ry="2.9" fill="#fdf2d2" opacity="0.47"/><ellipse cx="284.0" cy="564.9" rx="0.9" ry="3.1" fill="#fdf2d2" opacity="0.54"/><ellipse cx="79.3" cy="550.0" rx="1.3" ry="3.9" fill="#fdf2d2" opacity="0.62"/><ellipse cx="184.3" cy="557.9" rx="1.1" ry="3.9" fill="#fdf2d2" opacity="0.49"/><ellipse cx="106.1" cy="568.8" rx="1.3" ry="4.3" fill="#fdf2d2" opacity="0.35"/><ellipse cx="100.9" cy="564.3" rx="1.5" ry="3.1" fill="#fdf2d2" opacity="0.36"/><ellipse cx="225.5" cy="561.3" rx="0.9" ry="4.0" fill="#fdf2d2" opacity="0.53"/><ellipse cx="63.7" cy="547.9" rx="1.4" ry="2.4" fill="#fdf2d2" opacity="0.38"/><ellipse cx="268.0" cy="562.4" rx="1.1" ry="3.4" fill="#fdf2d2" opacity="0.58"/><ellipse cx="47.7" cy="543.3" rx="0.9" ry="4.2" fill="#fdf2d2" opacity="0.35"/><ellipse cx="287.5" cy="566.5" rx="1.0" ry="4.0" fill="#fdf2d2" opacity="0.34"/><ellipse cx="292.9" cy="567.6" rx="1.6" ry="4.0" fill="#fdf2d2" opacity="0.35"/><ellipse cx="202.4" cy="555.7" rx="1.0" ry="3.1" fill="#fdf2d2" opacity="0.42"/><ellipse cx="199.6" cy="556.8" rx="1.2" ry="3.0" fill="#fdf2d2" opacity="0.35"/><ellipse cx="256.1" cy="560.3" rx="1.6" ry="3.9" fill="#fdf2d2" opacity="0.45"/><ellipse cx="261.4" cy="560.6" rx="1.4" ry="3.6" fill="#fdf2d2" opacity="0.50"/><ellipse cx="232.4" cy="563.4" rx="0.9" ry="3.2" fill="#fdf2d2" opacity="0.31"/><ellipse cx="92.6" cy="558.5" rx="1.7" ry="2.1" fill="#fdf2d2" opacity="0.47"/><ellipse cx="237.7" cy="564.1" rx="1.3" ry="2.0" fill="#fdf2d2" opacity="0.61"/><ellipse cx="201.1" cy="556.5" rx="1.3" ry="3.3" fill="#fdf2d2" opacity="0.33"/></g>
<rect x="28" y="528" width="290" height="40" fill="url(#pHaze)"/>
<!-- leaves -->
<g filter="url(#pb2)" fill="#69701f">
<path d="M151 282l15 0 3 15-11 16-6 2-3-15z"/>
<path d="M27 373l12-1 7-6 10 4 11-4 18-5 2 12-13 21-8-4-12-3-9-8-11 13-7 3z"/>
<path d="M112 338l9-5 3 11-7-1z" opacity=".8"/>
<path d="M115 358l5 0-1 9z" opacity=".7"/>
<path d="M43 408l5 0 3 21-4-1z" opacity=".85"/>
<path d="M27 408l4 1-2 8z" opacity=".8"/>
</g>
<!-- whitish text panel overlay fading in from the left -->
<rect x="340" y="282" width="362" height="316" fill="url(#pPanel)" mask="url(#pPanelMask)"/>
<rect x="662.5" y="282" width="40" height="317" fill="url(#pStrip)"/>
<!-- woman -->
<g filter="url(#pb3)">
<path fill="#c9a27c" d="M327.3 415.9C328.1 413.3 329.4 408.4 330.7 408.4C332.1 408.4 333.1 412.4 334.7 415.9C336.3 419.4 338.2 423.8 339.7 427.9C341.2 432.0 342.6 435.3 343.3 438.9C344.0 442.4 344.2 445.0 343.7 447.8C343.2 450.7 342.1 453.7 340.7 454.8C339.3 455.9 337.5 455.2 335.7 453.8C333.9 452.4 331.4 449.3 330.7 446.8C330.0 444.3 331.9 442.5 331.7 439.9C331.5 437.2 330.6 434.9 329.7 431.9C328.8 428.8 327.2 425.8 326.7 422.9C326.3 420.0 326.6 418.6 327.3 415.9Z"/>
<path fill="url(#pLegR)" d="M299.8 461.4C302.0 454.4 313.5 453.9 317.8 455.0C322.1 456.2 321.6 462.6 323.8 467.8C325.9 472.9 328.5 479.7 329.7 483.7C330.9 487.7 329.3 485.6 330.4 490.0C331.6 494.4 334.4 501.7 335.9 508.3C337.4 514.8 337.5 520.0 338.7 526.5C339.8 533.1 340.7 538.2 342.3 544.8C344.0 551.4 345.2 556.5 347.8 563.1C350.4 569.7 352.7 575.0 356.9 581.4C361.2 587.7 372.9 595.1 371.6 598.2C370.2 601.2 355.9 600.2 349.6 598.2C343.4 596.1 339.5 591.5 336.8 586.8C334.2 582.2 336.3 578.1 335.0 572.2C333.7 566.3 331.2 560.5 329.5 554.0C327.9 547.4 327.8 542.3 325.9 535.7C323.9 529.1 321.4 523.7 318.6 517.4C315.8 511.1 312.6 504.9 310.3 500.6C308.0 496.3 307.7 500.7 305.8 493.7C303.9 486.6 297.7 468.3 299.8 461.4Z"/>
<path fill="url(#pLegL)" d="M281.5 470.2C284.4 465.0 293.5 464.0 299.8 461.4C306.2 458.8 314.1 450.6 316.8 455.8C319.5 461.0 315.6 482.5 314.9 490.0C314.2 497.5 313.9 495.4 313.1 497.3C312.3 499.2 312.3 497.0 310.3 500.6C308.4 504.2 304.6 511.1 302.1 517.4C299.7 523.7 298.0 529.1 296.6 535.7C295.3 542.3 295.5 547.4 294.8 554.0C294.2 560.5 293.5 566.6 293.0 572.2C292.5 577.8 291.7 580.3 292.1 585.0C292.4 589.7 298.1 595.8 294.8 598.2C291.5 600.5 277.3 601.2 273.8 598.2C270.3 595.1 275.0 587.7 275.6 581.4C276.3 575.0 276.8 569.7 277.5 563.1C278.1 556.5 278.1 551.4 279.3 544.8C280.4 538.2 282.7 533.1 283.9 526.5C285.0 520.0 285.7 514.8 285.7 508.3C285.7 501.7 284.6 496.9 283.9 490.0C283.1 483.1 278.6 475.3 281.5 470.2Z"/>
<path fill="url(#pLegV)" d="M281.5 470.2C284.4 465.0 293.5 464.0 299.8 461.4C306.2 458.8 314.1 450.6 316.8 455.8C319.5 461.0 315.6 482.5 314.9 490.0C314.2 497.5 313.9 495.4 313.1 497.3C312.3 499.2 312.3 497.0 310.3 500.6C308.4 504.2 304.6 511.1 302.1 517.4C299.7 523.7 298.0 529.1 296.6 535.7C295.3 542.3 295.5 547.4 294.8 554.0C294.2 560.5 293.5 566.6 293.0 572.2C292.5 577.8 291.7 580.3 292.1 585.0C292.4 589.7 298.1 595.8 294.8 598.2C291.5 600.5 277.3 601.2 273.8 598.2C270.3 595.1 275.0 587.7 275.6 581.4C276.3 575.0 276.8 569.7 277.5 563.1C278.1 556.5 278.1 551.4 279.3 544.8C280.4 538.2 282.7 533.1 283.9 526.5C285.0 520.0 285.7 514.8 285.7 508.3C285.7 501.7 284.6 496.9 283.9 490.0C283.1 483.1 278.6 475.3 281.5 470.2Z"/>
<path fill="url(#pLegV)" d="M299.8 461.4C302.0 454.4 313.5 453.9 317.8 455.0C322.1 456.2 321.6 462.6 323.8 467.8C325.9 472.9 328.5 479.7 329.7 483.7C330.9 487.7 329.3 485.6 330.4 490.0C331.6 494.4 334.4 501.7 335.9 508.3C337.4 514.8 337.5 520.0 338.7 526.5C339.8 533.1 340.7 538.2 342.3 544.8C344.0 551.4 345.2 556.5 347.8 563.1C350.4 569.7 352.7 575.0 356.9 581.4C361.2 587.7 372.9 595.1 371.6 598.2C370.2 601.2 355.9 600.2 349.6 598.2C343.4 596.1 339.5 591.5 336.8 586.8C334.2 582.2 336.3 578.1 335.0 572.2C333.7 566.3 331.2 560.5 329.5 554.0C327.9 547.4 327.8 542.3 325.9 535.7C323.9 529.1 321.4 523.7 318.6 517.4C315.8 511.1 312.6 504.9 310.3 500.6C308.0 496.3 307.7 500.7 305.8 493.7C303.9 486.6 297.7 468.3 299.8 461.4Z"/>
<path fill="#8b745c" d="M287.9 410.4C283.9 412.2 282.8 417.3 279.9 421.9C277.0 426.5 273.7 431.6 271.9 435.9C270.1 440.2 269.8 441.9 269.9 445.8C270.1 449.8 271.0 453.4 272.9 457.8C274.9 462.2 276.1 469.5 280.9 470.2C285.7 470.8 293.2 464.1 299.8 461.4C306.5 458.7 314.7 457.4 317.8 455.0C320.8 452.6 316.4 451.3 316.8 447.8C317.1 444.4 318.9 440.5 319.8 435.9C320.7 431.2 321.7 425.3 321.8 421.9C321.8 418.5 323.8 419.0 320.2 417.1C316.6 415.3 307.6 412.8 301.8 411.5C296.0 410.3 291.8 408.5 287.9 410.4Z"/>
<path fill="#6f5a45" opacity=".5" d="M279.9 421.9C277.0 423.7 273.7 431.6 271.9 435.9C270.1 440.2 269.8 441.9 269.9 445.8C270.1 449.8 271.0 453.4 272.9 457.8C274.9 462.2 277.8 468.7 280.9 470.2C283.9 471.6 289.3 468.7 289.9 465.8C290.4 462.8 285.1 458.5 283.9 453.8C282.6 449.1 282.2 444.9 282.9 439.9C283.6 434.8 288.4 429.1 287.9 425.9C287.3 422.7 282.8 420.1 279.9 421.9Z"/>
<path fill="url(#pArm)" d="M276.9 302.3C277.7 298.8 282.0 298.3 284.3 300.3C286.6 302.4 287.4 308.6 289.9 313.9C292.3 319.2 294.8 325.2 297.8 329.8C300.9 334.5 303.8 336.2 306.8 339.8C309.9 343.4 313.0 344.0 314.8 349.8C316.6 355.5 318.0 367.3 316.8 371.7C315.5 376.1 312.2 374.6 307.8 374.1C303.4 373.6 295.5 370.6 292.3 368.7C289.0 366.9 289.8 367.1 289.9 363.7C290.0 360.3 293.4 355.2 292.9 349.8C292.3 344.4 289.2 339.2 286.9 333.8C284.5 328.5 281.7 325.5 279.9 319.9C278.1 314.2 276.1 305.9 276.9 302.3Z"/>
<path fill="#8a5c34" opacity=".55" d="M284.3 300.9C284.8 300.6 287.4 308.7 289.9 313.9C292.3 319.1 294.8 325.2 297.8 329.8C300.9 334.5 303.9 336.2 306.8 339.8C309.7 343.4 313.2 347.6 313.8 349.8C314.3 351.9 311.9 353.2 309.8 351.8C307.7 350.3 305.0 345.6 302.2 341.8C299.4 338.0 297.0 335.5 294.3 330.8C291.5 326.2 288.7 321.3 286.9 315.9C285.1 310.5 283.7 301.3 284.3 300.9Z"/>
<path fill="#ebdfd2" d="M292.3 368.1C294.1 367.0 297.0 370.2 299.8 371.3C302.7 372.4 305.2 374.0 308.2 374.1C311.3 374.2 313.5 373.3 316.8 372.1C320.0 371.0 323.7 366.7 326.1 367.7C328.5 368.7 328.8 374.1 330.1 377.7C331.5 381.3 333.3 382.9 333.7 387.7C334.2 392.4 333.1 402.5 332.7 404.0C332.4 405.5 332.3 395.3 331.7 396.0C331.2 396.7 330.5 403.7 329.7 408.0C328.9 412.2 329.9 418.1 327.3 419.5C324.8 421.0 320.4 417.4 315.8 415.9C311.2 414.4 306.9 412.2 301.8 411.1C296.8 410.1 290.3 412.7 287.9 410.0C285.5 407.2 288.2 398.6 288.5 396.0C288.8 393.4 289.2 398.9 289.5 395.6C289.7 392.3 289.4 382.6 289.9 377.7C290.4 372.7 290.5 369.3 292.3 368.1Z"/>
<g clip-path="url(#pTopClip)"><text x="316" y="400" font-family="Liberation Serif,serif" font-style="italic" font-weight="bold" font-size="11" fill="#e28c76" transform="rotate(-16 316 400)">Dream</text>
<path d="M315 404l16-6" stroke="#e28c76" stroke-width="1.1" fill="none"/></g>
<path fill="#d9a058" opacity=".8" d="M285.9 352.8C286.5 349.8 290.9 347.4 292.3 349.4C293.6 351.4 294.0 360.7 293.5 363.7C292.9 366.7 290.4 368.1 289.1 366.1C287.7 364.2 285.3 355.8 285.9 352.8Z"/>
<path fill="url(#pHair)" d="M306.8 337.8C306.5 333.7 309.6 330.8 311.8 326.9C313.9 322.9 315.9 318.9 318.8 315.9C321.6 312.8 324.3 311.2 327.7 309.9C331.1 308.7 334.1 308.4 337.7 308.9C341.3 309.5 345.0 311.5 347.7 312.9C350.4 314.3 350.9 315.3 352.7 316.9C354.5 318.5 356.9 320.1 357.6 321.9C358.4 323.7 357.1 324.3 356.6 326.9C356.2 329.4 355.4 331.7 355.2 335.8C355.1 340.0 356.3 344.8 356.0 349.8C355.8 354.8 355.3 359.8 354.1 363.7C352.8 367.7 350.9 369.5 349.1 371.7C347.2 373.9 345.2 376.6 343.7 376.1C342.2 375.6 342.1 369.3 340.7 368.7C339.3 368.1 337.5 371.0 335.7 372.7C333.9 374.4 332.3 378.3 330.7 378.1C329.1 377.9 328.0 374.3 326.7 371.7C325.5 369.1 325.2 366.2 323.8 363.7C322.3 361.2 320.6 360.3 318.8 357.8C317.0 355.2 315.9 353.4 313.8 349.8C311.6 346.2 307.2 341.9 306.8 337.8Z"/>
<path fill="url(#pHairV)" d="M306.8 337.8C306.5 333.7 309.6 330.8 311.8 326.9C313.9 322.9 315.9 318.9 318.8 315.9C321.6 312.8 324.3 311.2 327.7 309.9C331.1 308.7 334.1 308.4 337.7 308.9C341.3 309.5 345.0 311.5 347.7 312.9C350.4 314.3 350.9 315.3 352.7 316.9C354.5 318.5 356.9 320.1 357.6 321.9C358.4 323.7 357.1 324.3 356.6 326.9C356.2 329.4 355.4 331.7 355.2 335.8C355.1 340.0 356.3 344.8 356.0 349.8C355.8 354.8 355.3 359.8 354.1 363.7C352.8 367.7 350.9 369.5 349.1 371.7C347.2 373.9 345.2 376.6 343.7 376.1C342.2 375.6 342.1 369.3 340.7 368.7C339.3 368.1 337.5 371.0 335.7 372.7C333.9 374.4 332.3 378.3 330.7 378.1C329.1 377.9 328.0 374.3 326.7 371.7C325.5 369.1 325.2 366.2 323.8 363.7C322.3 361.2 320.6 360.3 318.8 357.8C317.0 355.2 315.9 353.4 313.8 349.8C311.6 346.2 307.2 341.9 306.8 337.8Z"/>
<path fill="#3c2416" opacity=".35" filter="url(#pb1)" d="M315.8 333.8C316.0 328.8 318.3 325.5 320.8 321.9C323.3 318.3 326.3 315.3 329.7 313.9C333.1 312.5 336.8 312.8 339.7 313.9C342.6 315.0 344.2 316.3 345.7 319.9C347.1 323.5 347.7 328.1 347.7 333.8C347.7 339.6 347.1 346.4 345.7 351.8C344.2 357.2 342.2 360.9 339.7 363.7C337.2 366.6 334.2 368.4 331.7 367.7C329.2 367.0 327.9 363.0 325.7 359.7C323.6 356.5 321.6 354.4 319.8 349.8C318.0 345.1 315.6 338.9 315.8 333.8Z"/>
<path fill="#e0953f" opacity=".5" d="M349.7 313.9C350.9 312.8 356.4 319.5 357.6 321.9C358.9 324.2 357.1 324.3 356.6 326.9C356.2 329.4 355.4 331.7 355.2 335.8C355.1 340.0 356.3 344.8 356.0 349.8C355.8 354.8 355.3 359.8 354.1 363.7C352.8 367.7 350.9 369.5 349.1 371.7C347.2 373.9 344.9 376.5 343.7 376.1C342.4 375.7 341.4 372.7 342.1 369.7C342.8 366.8 346.1 364.4 347.7 359.7C349.2 355.1 350.1 349.5 350.7 343.8C351.2 338.1 350.8 333.2 350.7 327.9C350.5 322.5 348.4 315.0 349.7 313.9Z"/>
<path fill="#8a6040" d="M262.0 299.5C262.2 298.7 264.8 297.7 266.9 296.4C269.1 295.1 271.6 293.3 273.9 292.4C276.3 291.4 278.2 290.7 279.9 291.2C281.6 291.6 282.6 293.2 283.5 295.0C284.3 296.7 285.0 299.3 284.7 300.9C284.4 302.6 283.1 304.0 281.9 304.3C280.7 304.7 279.2 303.9 277.9 302.9C276.7 302.0 276.2 299.3 274.9 299.0C273.7 298.6 272.0 299.7 270.9 300.9C269.9 302.2 269.8 305.4 268.9 305.9C268.1 306.5 267.0 304.8 266.3 303.9C265.7 303.0 266.3 301.7 265.5 300.9C264.8 300.2 261.7 300.4 262.0 299.5Z"/>
</g>
<ellipse cx="313" cy="582" rx="26" ry="17" fill="#f2e6a2" opacity=".7" filter="url(#pb4)"/>
<path fill="#fffdf0" opacity="1" filter="url(#pb4)" d="M310.3 497.3C313.3 497.3 315.8 510.5 318.6 517.4C321.4 524.3 324.2 529.8 325.9 535.7C327.5 541.6 327.7 545.9 327.7 550.3C327.7 554.7 328.5 558.0 325.9 560.3C323.2 562.6 318.0 563.1 313.1 563.1C308.2 563.1 301.6 562.6 298.5 560.3C295.3 558.0 296.1 554.7 295.7 550.3C295.4 545.9 295.5 541.6 296.6 535.7C297.8 529.8 299.7 524.3 302.1 517.4C304.6 510.5 307.4 497.3 310.3 497.3Z"/>
<path fill="#ffffff" opacity=".95" filter="url(#pb2)" d="M310.3 497.3C313.3 497.3 315.8 510.5 318.6 517.4C321.4 524.3 324.2 529.8 325.9 535.7C327.5 541.6 327.7 545.9 327.7 550.3C327.7 554.7 328.5 558.0 325.9 560.3C323.2 562.6 318.0 563.1 313.1 563.1C308.2 563.1 301.6 562.6 298.5 560.3C295.3 558.0 296.1 554.7 295.7 550.3C295.4 545.9 295.5 541.6 296.6 535.7C297.8 529.8 299.7 524.3 302.1 517.4C304.6 510.5 307.4 497.3 310.3 497.3Z"/>
<path d="M640 599l6-4 10 1 12-3 14 2 19-2v6z" fill="#6b5a3c" opacity=".7" filter="url(#pb3)"/>
</svg></div>
  <div id="bodytext" class="abs" style="left:-28px;top:-106px;width:0;height:0;filter:grayscale(1)">
<div class="bl bj" style="left:389.0px;top:301.8px;width:268.6px;letter-spacing:-0.424px">Фінансова грамотність майже ніколи не починається з</div>
<div class="bl" style="left:389.0px;top:316.2px;letter-spacing:-0.322px">бізнесу, інвестицій або &quot;розумних книжок&quot;.</div>
<div class="bl bj" style="left:389.0px;top:345.0px;width:268.6px;letter-spacing:-0.424px">Вона починається з дуже простих і, чесно кажучи, не дуже</div>
<div class="bl" style="left:389.0px;top:359.4px;letter-spacing:-0.373px">приємних запитань до себе:</div>
<div class="bl" style="left:406.3px;top:373.8px;letter-spacing:-0.421px">де мої гроші,</div>
<div class="bl" style="left:406.3px;top:388.2px;letter-spacing:-0.396px">чому їх знову менше, ніж я очікував,</div>
<div class="bl" style="left:406.3px;top:402.6px;letter-spacing:-0.386px">і що я роблю не так уже не перший рік.</div>
<div class="bl bj" style="left:389.0px;top:431.4px;width:268.6px;letter-spacing:-0.428px">ПОки людина не навчилась спокійно дивитись на власні</div>
<div class="bl bj" style="left:389.0px;top:445.8px;width:268.6px;letter-spacing:-0.535px">витрати і доходи, БУДЬ-ЯКА РОЗМОВА ПРО ФІНАНСИ</div>
<div class="bl bj" style="left:389.0px;top:460.2px;width:268.6px;letter-spacing:-0.613px">БІЗНЕСУ ВИГЛЯДАЄ ЯК РОЗМОВА ПРО КЕРУВАННЯ</div>
<div class="bl bj" style="left:389.0px;top:474.6px;width:268.6px;letter-spacing:-0.608px">ЛІТАКОМ БЕЗ УМІННЯ ЇЗДИТИ НА ВЕЛОСИПЕДІ. НАЧЕБТО</div>
<div class="bl bj" style="left:389.0px;top:489.0px;width:268.6px;letter-spacing:-0.598px">ТЕОРІЮ ЗНАЄШ, АЛЕ СТРАШНО, ДОРОГО І ДУЖЕ ШВИДКО</div>
<div class="bl" style="left:389.0px;top:503.4px;letter-spacing:-0.602px">ЗАКІНЧУЄТЬСЯ.</div>
<div class="bl bj" style="left:389.0px;top:532.2px;width:268.6px;letter-spacing:-0.609px">ТОМУ ФІНАНСОВА ГРАМОТНІСТЬ — ЦЕ НАСАМПЕРЕД</div>
<div class="bl bj" style="left:389.0px;top:546.6px;width:268.6px;letter-spacing:-0.603px">ЗВИЧКА. ЗВИЧКА РАХУВАТИ, ЗВИЧКА ДУМАТИ НАПЕРЕД І</div>
<div class="bl" style="left:389.0px;top:561.0px;letter-spacing:-0.526px">ЗВИЧКА НЕ ДИВУВАТИСЬ НАСЛІДКАМ ВЛАСНИХ РІШЕНЬ.</div>
<div class="dot" style="left:397.8px;top:377.6px"></div><div class="dot" style="left:397.8px;top:392.0px"></div><div class="dot" style="left:397.8px;top:406.4px"></div>
  </div>
  <svg id="cursor" class="abs" style="left:409.2px;top:365.4px" width="10" height="15" viewBox="-0.5 -0.5 10 15"><path d="M0 0V10.8L2.5 8.5L4.3 12.7L6 12L4.2 7.9H7.6Z" fill="#fff" stroke="#222" stroke-width=".8" stroke-linejoin="round"/></svg>
  <div class="vt" style="left:955.4px;top:178.6px;color:#1b10d6;text-decoration:underline;font-size:11.4px;letter-spacing:-0.64px">PEPPERGROUP.COM.UA</div>
  <div class="vt" style="left:955.6px;top:405px">ГОДУНОВ С.Д.</div>
  <div class="vt" style="left:955.6px;top:502px">ПІДГОТОВЛЕНО</div>
</div>
<div class="abs" style="left:0;top:598.9px;width:1016px;height:2.2px;background:#000"></div>
<div class="abs" style="left:0;top:601.1px;width:1016px;height:1px;background:#fff"></div>
</div>
</body>
</html>
